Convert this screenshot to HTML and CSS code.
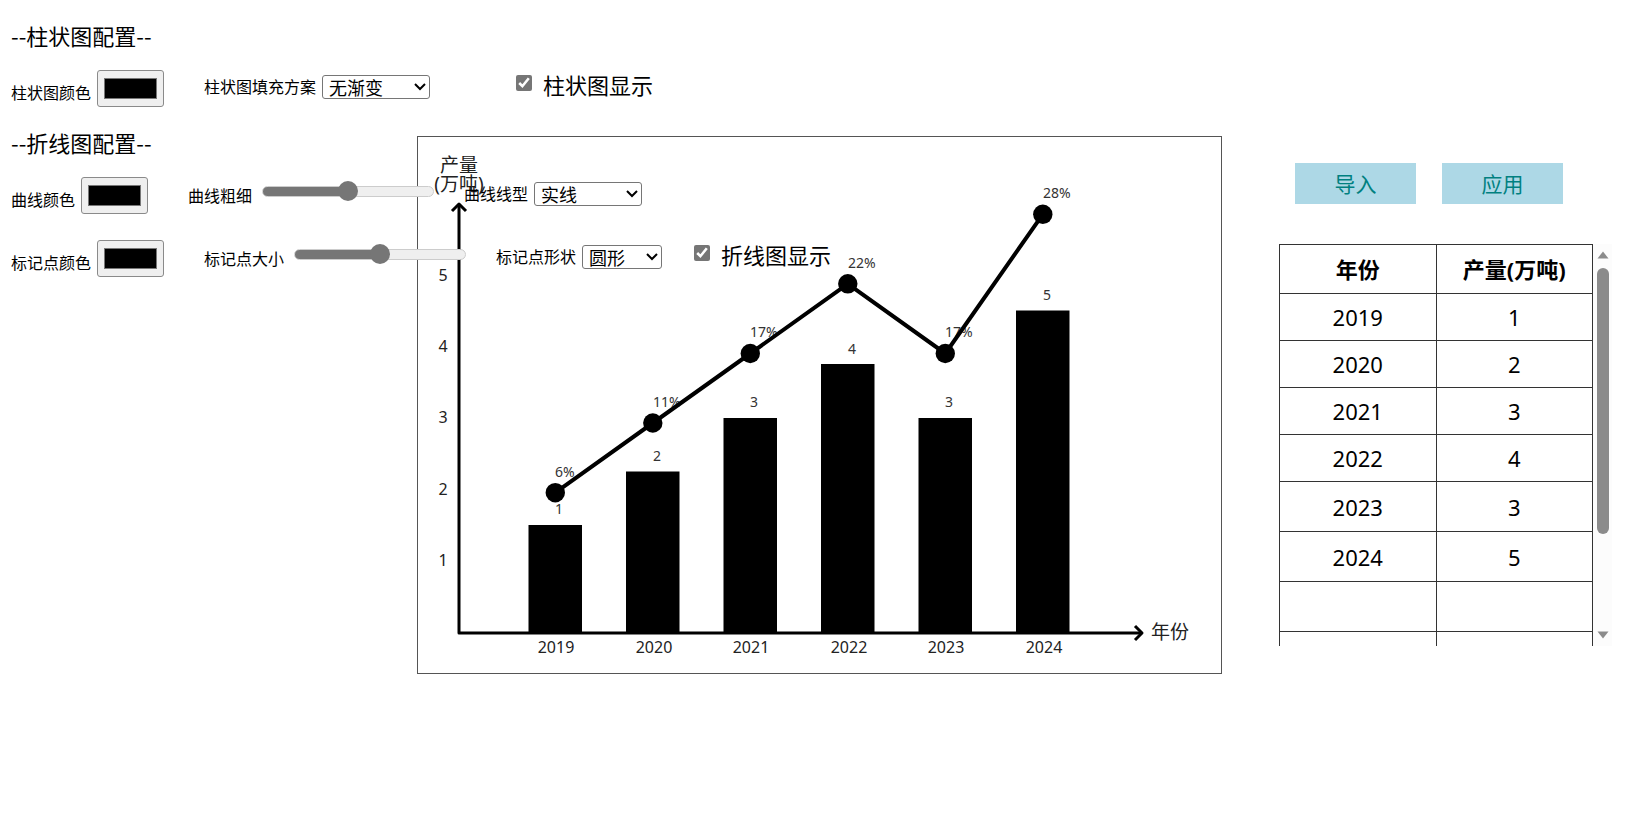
FILE: index.html
```html
<!DOCTYPE html>
<html lang="zh-CN">
<head>
<meta charset="utf-8">
<title>产量图表</title>
<link rel="stylesheet" href="styles.css">
</head>
<body>
<main class="page">
  <form class="settings">
    <h2 class="settings-title">--柱状图配置--</h2>
    <div class="row">
      <div class="field field-color"><label for="bar-color">柱状图颜色</label><input class="color" type="color" id="bar-color" value="#000000"></div>
      <div class="field field-select"><label for="bar-fill">柱状图填充方案</label><select class="select" id="bar-fill"><option>无渐变</option></select></div>
      <div class="field field-check field-check-far"><input class="check" type="checkbox" id="bar-show" checked><label for="bar-show">柱状图显示</label></div>
    </div>
    <h2 class="settings-title">--折线图配置--</h2>
    <div class="row">
      <div class="field field-color"><label for="line-color">曲线颜色</label><input class="color" type="color" id="line-color" value="#000000"></div>
      <div class="field field-range"><label for="line-width">曲线粗细</label><input class="range" type="range" id="line-width" min="0" max="10" value="5"></div>
      <div class="field field-select"><label for="line-type">曲线线型</label><select class="select" id="line-type"><option>实线</option></select></div>
    </div>
    <div class="row">
      <div class="field field-color"><label for="dot-color">标记点颜色</label><input class="color" type="color" id="dot-color" value="#000000"></div>
      <div class="field field-range"><label for="dot-size">标记点大小</label><input class="range" type="range" id="dot-size" min="0" max="10" value="5"></div>
      <div class="field field-select"><label for="dot-shape">标记点形状</label><select class="select select-short" id="dot-shape"><option>圆形</option></select></div>
      <div class="field field-check"><input class="check" type="checkbox" id="line-show" checked><label for="line-show">折线图显示</label></div>
    </div>
  </form>

  <section class="chart">
    <svg class="chart-svg" viewBox="418 137 803 536" role="img" aria-label="产量与年份">
      <g class="bars">
        <rect x="528.5" y="525" width="53.5" height="108"/>
        <rect x="626" y="471.5" width="53.5" height="161.5"/>
        <rect x="723.5" y="418" width="53.5" height="215"/>
        <rect x="821" y="364" width="53.5" height="269"/>
        <rect x="918.5" y="418" width="53.5" height="215"/>
        <rect x="1016" y="310.5" width="53.5" height="322.5"/>
      </g>
      <g class="axis">
        <path d="M459 204V633H1142"/>
        <path d="M452 211L459 204L466 211"/>
        <path d="M1135 626L1142 633L1135 640"/>
      </g>
      <g class="name" text-anchor="middle">
        <text x="459" y="172">产量</text>
        <text x="459" y="191">(万吨)</text>
        <text x="1170" y="639">年份</text>
      </g>
      <g class="tick" text-anchor="middle">
        <text x="443" y="566">1</text><text x="443" y="495">2</text><text x="443" y="423">3</text><text x="443" y="352">4</text><text x="443" y="281">5</text>
        <text x="556" y="653">2019</text><text x="654" y="653">2020</text><text x="751" y="653">2021</text><text x="849" y="653">2022</text><text x="946" y="653">2023</text><text x="1044" y="653">2024</text>
      </g>
      <g class="value">
        <text x="555" y="514">1</text><text x="653" y="461">2</text><text x="750" y="407">3</text><text x="848" y="354">4</text><text x="945" y="407">3</text><text x="1043" y="300">5</text>
        <text x="555" y="477">6%</text><text x="653" y="407">11%</text><text x="750" y="337">17%</text><text x="848" y="268">22%</text><text x="945" y="337">17%</text><text x="1043" y="198">28%</text>
      </g>
      <polyline class="line" points="555.3,492.7 652.8,423 750.3,353.5 847.8,283.8 945.3,353.5 1042.8,214.3"/>
      <g class="dots">
        <circle cx="555.3" cy="492.7" r="9.7"/><circle cx="652.8" cy="423" r="9.7"/><circle cx="750.3" cy="353.5" r="9.7"/>
        <circle cx="847.8" cy="283.8" r="9.7"/><circle cx="945.3" cy="353.5" r="9.7"/><circle cx="1042.8" cy="214.3" r="9.7"/>
      </g>
    </svg>
  </section>

  <aside class="side">
    <div class="actions">
      <button class="action" type="button">导入</button>
      <button class="action" type="button">应用</button>
    </div>
    <div class="data">
      <div class="data-view">
        <table class="table">
          <thead><tr><th>年份</th><th>产量(万吨)</th></tr></thead>
          <tbody>
            <tr><td>2019</td><td>1</td></tr>
            <tr><td>2020</td><td>2</td></tr>
            <tr><td>2021</td><td>3</td></tr>
            <tr><td>2022</td><td>4</td></tr>
            <tr class="tall"><td>2023</td><td>3</td></tr>
            <tr class="tall"><td>2024</td><td>5</td></tr>
            <tr class="tall"><td></td><td></td></tr>
            <tr class="tall"><td></td><td></td></tr>
          </tbody>
        </table>
      </div>
      <div class="scrollbar" aria-hidden="true">
        <svg class="arrow" viewBox="0 0 12 8"><path d="M6 0.5L11.5 7.5H0.5Z"/></svg>
        <div class="track"><div class="thumb"></div></div>
        <svg class="arrow" viewBox="0 0 12 8"><path d="M6 7.5L11.5 0.5H0.5Z"/></svg>
      </div>
    </div>
  </aside>
</main>
</body>
</html>
```
FILE: styles.css
```css
* { box-sizing: border-box; }

body {
  margin: 0;
  background: #fff;
  color: #000;
  font-family: "Noto Sans", "Noto Sans CJK SC", sans-serif;
  font-size: 16px;
}

.page {
  display: grid;
  grid-template-columns: 417fr 805fr 418fr;
  align-items: start;
}

/* The settings run across the first column and over the chart. */
.settings {
  grid-area: 1 / 1 / 2 / 3;
  justify-self: start;
  z-index: 1;
  padding: 19px 0 0 11px;
  font-family: "Noto Sans CJK SC", sans-serif;
}

.settings-title {
  margin: 0 0 19px;
  font-size: 22px;
  font-weight: 400;
  line-height: 32px;
}

.row {
  display: flex;
  align-items: flex-start;
  height: 37px;
  margin-bottom: 19px;
  white-space: nowrap;
}

.row + .row { margin-top: 26px; }
.row:has(+ .row) { margin-bottom: 0; }

.field {
  display: flex;
  align-items: center;
  gap: 6px;
  line-height: 22px;
}

.field-color { align-items: flex-end; margin-right: 40px; }
.field-color label { padding-bottom: 4px; }
.field-select { margin-top: 5px; }
.field-select label { padding-bottom: 2px; }
.field-range { align-items: flex-start; gap: 10px; margin: 4px 30px 0 0; }
.field-range label { padding-top: 3px; }
.field-check { gap: 11px; margin: 3px 0 0 32px; font-size: 22px; }
.field-check-far { margin-left: 86px; }

.color {
  width: 67px;
  height: 37px;
  padding: 7px 6px;
  border: 1px solid #8a8a8a;
  border-radius: 3px;
  background: #efefef;
}

.color::-webkit-color-swatch-wrapper { padding: 0; }
.color::-webkit-color-swatch { border: 1px solid #777; border-radius: 0; }

.select {
  appearance: none;
  width: 108px;
  height: 24px;
  padding: 0 6px;
  border: 1px solid #767676;
  border-radius: 3px;
  background: #fff url("data:image/svg+xml,%3Csvg xmlns='http://www.w3.org/2000/svg' width='12' height='8'%3E%3Cpath d='M1 1L6 6L11 1' fill='none' stroke='black' stroke-width='2'/%3E%3C/svg%3E") no-repeat right 3px center;
  color: #000;
  font: 18px/20px "Noto Sans CJK SC", sans-serif;
}

.select-short { width: 80px; }

.check {
  width: 16px;
  height: 16px;
  margin: 0 0 2px;
  accent-color: #767676;
}

.range {
  appearance: none;
  width: 172px;
  height: 20px;
  margin: 0;
  background: none;
}

.range::-webkit-slider-runnable-track {
  height: 11px;
  border: 1px solid #ccc;
  border-radius: 6px;
  background: linear-gradient(to right, #767676 50%, #efefef 50%) border-box;
}

.range::-webkit-slider-thumb {
  appearance: none;
  width: 20px;
  height: 20px;
  margin-top: -6px;
  border-radius: 50%;
  background: #767676;
}

.chart {
  grid-area: 1 / 2 / 2 / 3;
  margin-top: 136px;
  border: 1px solid #555;
}

.chart-svg {
  display: block;
  width: 100%;
}

.axis { fill: none; stroke: #000; stroke-width: 3; stroke-linejoin: round; }
.line { fill: none; stroke: #000; stroke-width: 4; stroke-linejoin: round; }
.name { fill: #222; font-size: 19px; }
.tick { fill: #222; font-size: 16px; }
.value { fill: #333; font-size: 14px; }

.side {
  grid-area: 1 / 3 / 2 / 4;
  padding: 163px 28px 0 57px;
}

.actions {
  display: flex;
  gap: 26px;
  padding: 0 49px 0 16px;
}

.action {
  flex: 1;
  height: 41px;
  padding: 0;
  border: 0;
  background: #add8e6;
  color: #008080;
  font: 21px/41px "Noto Sans CJK SC", sans-serif;
}

.data {
  display: flex;
  height: 402px;
  margin-top: 40px;
}

.data-view {
  flex: 1;
  overflow: hidden;
}

.table {
  width: 100%;
  border-collapse: collapse;
  table-layout: fixed;
  font-size: 22px;
}

.table th,
.table td {
  height: 47px;
  padding: 0;
  border: 1px solid #333;
  text-align: center;
  line-height: 32px;
}

.table th { height: 49px; font-size: 22px; }
.table .tall td { height: 50px; }

.scrollbar {
  display: flex;
  flex-direction: column;
  align-items: center;
  gap: 9px;
  width: 19px;
  padding: 7px 0;
  background: #fcfcfc;
}

.arrow { width: 12px; height: 8px; fill: #8b8b8b; }
.track { flex: 1; }

.thumb {
  width: 12px;
  height: 75%;
  border-radius: 6px;
  background: #8b8b8b;
}
```
